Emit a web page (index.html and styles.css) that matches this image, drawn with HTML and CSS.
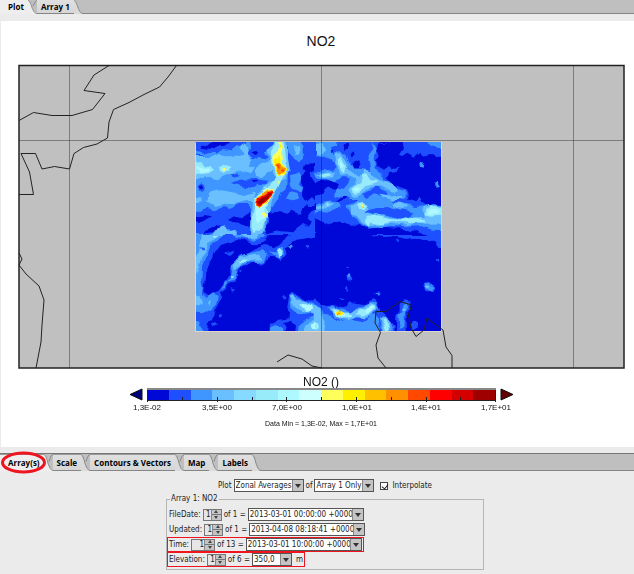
FILE: index.html
```html
<!DOCTYPE html>
<html lang="en">
<head>
<meta charset="utf-8">
<title>NO2 plot</title>
<link rel="stylesheet" href="styles.css">
</head>
<body>
<svg class="defs" aria-hidden="true">
  <symbol id="edge" viewBox="0 0 9 18" preserveAspectRatio="none">
    <path d="M0 0L1 1Q3 3 4 9T9 17V18H0Z" fill="#dadada"/>
    <path d="M0 .5Q2 1 3 6T6 15Q7 17 9 17.500M9 .5Q7 1 5 8" fill="none" stroke="#858585"/>
  </symbol>
  <symbol id="edge-active" viewBox="0 0 9 18" preserveAspectRatio="none">
    <path d="M0 0Q3 3 4 9T9 17V18H0Z" fill="#eee"/>
    <path d="M0 .5Q2 1 3 6T6 15Q7 17 9 17.500M9 .5Q7 1 5 8" fill="none" stroke="#858585"/>
  </symbol>
  <symbol id="edge-last" viewBox="0 0 9 18" preserveAspectRatio="none">
    <path d="M0 0Q2 1 3 6T6 15Q7 17 9 18H0Z" fill="#dadada"/>
    <path d="M0 .5Q2 1 3 6T6 15Q7 17 9 17.500" fill="none" stroke="#858585"/>
  </symbol>
</svg>

<nav class="tabs tabs-top" aria-label="Views">
  <button class="tab active">Plot</button><svg class="edge"><use href="#edge-active"/></svg>
  <button class="tab">Array 1</button><svg class="edge"><use href="#edge-last"/></svg>
</nav>

<main class="plot">
<svg class="chart" viewBox="1 21 633 426" role="img" aria-label="NO2 concentration map">
  <defs>
    <clipPath id="data"><rect x="195.500" y="142" width="245.500" height="189"/></clipPath>
    <clipPath id="nw"><rect x="-30" y="-30" width="405" height="330"/></clipPath>
    <clipPath id="ne"><rect x="0" y="-30" width="420" height="330"/></clipPath>
    <clipPath id="sw"><rect x="-30" y="0" width="405" height="330"/></clipPath>
    <filter id="ripple" x="-5%" y="-5%" width="110%" height="110%" color-interpolation-filters="sRGB">
      <feTurbulence type="fractalNoise" baseFrequency="0.1" numOctaves="1" seed="7"/>
      <feDisplacementMap in="SourceGraphic" scale="7" xChannelSelector="R" yChannelSelector="G"/>
    </filter>
  </defs>
  <text class="title" x="321" y="46">NO2</text>
  <rect x="19" y="66" width="605" height="302" fill="#c0c0c0"/>

  <g clip-path="url(#data)">
    <rect x="195" y="142" width="247" height="190" fill="#0008d8"/>
    <g filter="url(#ripple)">

    <g transform="translate(190 135) scale(.33333)" clip-path="url(#nw)">
      <path class="c2" d="M-20 0H390V301H-20Z"/>
      <path class="c1" d="M16 0H172L168 30 140 34 125 46 100 42 82 52 60 50 40 56 16 48ZM175 0H250L246 40 228 42 222 54 238 64 226 70 206 66 186 76 176 60 160 62 164 48 186 42ZM0 60L38 64 46 72 0 80ZM126 144L150 134 196 132 238 138 230 154 204 152 190 160 150 152ZM22 150L34 142 44 150 42 164 28 168ZM282 0H390V300H216L236 244 248 212 262 200 272 170 292 146 294 110 278 92 276 50ZM0 226L36 228 50 218 76 226 100 216 118 222 140 210 172 208 186 226 180 300H130L118 282 88 284 60 300H0ZM84 88L96 84 100 92 90 96ZM120 120L148 112 152 120 132 126Z"/>
      <path class="c0" d="M28 28L54 32 76 14 130 14 112 32 84 34 70 42 46 40 32 38ZM26 152L34 148 40 154 36 160 28 160ZM184 52L202 48 208 54 196 60ZM182 138L204 137 202 142 188 144ZM114 254L136 244 158 246 184 230 184 278 166 276 148 266 126 264ZM16 246L42 240 70 244 46 252 30 264 16 262ZM50 284L76 270 92 276 68 292 44 296ZM342 92L358 82 378 84 390 90V220L364 232 352 250 366 262 352 278 336 270 308 292 266 288 230 298 222 278 238 260 236 234 264 230 290 236 304 224 332 236 352 204 336 178 340 154 330 130 350 112 338 106ZM306 26L326 22 336 34 320 38 308 40Z"/>
      <path class="c1" d="M362 112L376 104 390 118V150L374 142 364 126ZM350 200L366 186 378 200 366 214 350 212ZM306 208L326 206 332 216 316 222Z"/>
      <path class="c2" d="M288 0L320 0 340 34 342 62 328 82 314 66 296 54ZM300 124L324 114 334 130 326 146 340 156 334 172 308 164 302 148ZM296 170L322 176 328 190 306 196 286 190Z"/>
      <path class="c3" d="M-10 66L60 66 88 54 110 58 128 68 158 52 150 40 160 26 176 38 168 54 184 78 180 92 194 100 184 118 160 110 144 104 130 118 104 126 86 134 60 128 36 132 -10 124ZM56 174L90 166 130 172 158 180 190 170 190 202 168 198 136 208 100 206 76 212 52 200ZM194 110L204 92 222 82 246 72 252 106 232 112 216 126 198 124ZM190 186L202 174 232 154 256 132 266 148 250 190 240 230 222 262 218 300H180L186 240ZM228 44L248 28 254 0H290L292 60 300 104 286 132 270 138 246 114 240 60ZM314 26L330 36 332 54 322 58ZM66 300L80 280 102 274 112 290 140 284 140 300ZM0 184L34 188 36 202 0 208Z"/>
      <path class="c5" d="M0 88L34 78 46 92 66 94 72 108 52 118 34 120 0 116ZM88 98L102 86 120 92 118 108 102 118 90 110ZM256 0H284L282 50 288 86 296 106 278 128 264 158 250 180 226 220 238 240 220 264 208 288 188 294 188 248 196 214 192 188 216 170 246 154 256 126 248 90 244 62Z"/>
      <path class="c6" d="M20 94L54 98 62 108 32 114ZM194 194L224 164 244 158 230 212 220 232 226 250 204 262 198 240Z"/>
      <path class="c8" d="M259 0H275L278 36 274 56 276 86 294 100 290 116 278 122 260 118 252 100 250 66 262 56 266 40ZM194 188L214 176 232 164 252 162 256 172 244 182 236 198 220 212 208 218 198 208ZM214 242L222 238 232 242 228 248 220 250ZM98 102L106 98 112 102 106 108ZM262 140L270 138 267 146Z"/>
      <path class="c9" d="M264 24L274 24 270 40 266 36ZM254 80L270 62 272 86 294 102 288 116 266 120 254 108Z"/>
      <path class="c11" d="M256 90L268 86 274 94 292 100 286 112 272 118 258 110ZM196 190L230 168 250 164 252 174 234 196 208 216 198 206Z"/>
      <path class="c12" d="M258 94L266 90 270 100 262 106ZM276 102L286 104 284 110 276 108Z"/>
      <path class="c13" d="M200 190L218 184 236 170 250 168 246 180 226 202 208 212 200 204Z"/>
      <path class="c15" d="M204 196L220 188 236 174 242 176 234 188 218 204 206 206Z"/>
    </g>

    <g transform="translate(315 135) scale(.33333)" clip-path="url(#ne)">
      <path class="c1" d="M0 0H410V62L362 66 352 60 328 64 316 54 300 68 276 56 262 66 252 62 264 36 258 20 194 24 180 50 192 66 180 76 184 92 204 104 220 92 230 100 250 96 248 108 222 112 220 122 212 130 236 152 256 158 276 166 280 194 302 202 314 184 322 202 338 212 358 206 410 218V301H336L310 288 288 292 252 278 210 276 176 280 158 282 134 264 104 274 76 262 42 270 0 250Z"/>
      <path class="c0" d="M194 0H258V22H190ZM0 148L20 136 46 136 72 148 66 162 40 158 22 176 0 182ZM84 28L98 26 100 38 90 42ZM40 52L52 46 58 52 46 58ZM104 60L112 52 116 66 106 70ZM110 84L132 76 140 88 130 100 114 98ZM66 198L88 182 94 188 74 204ZM118 186L140 182 154 190 138 200 122 196ZM176 198L204 198 210 204 188 210ZM224 236L250 234 272 240 256 246 230 244ZM34 204L52 200 58 206 40 212Z"/>
      <path class="c2" d="M0 0H70L66 34 48 40 54 60 74 48 94 56 100 74 118 102 142 102 166 110 160 72 172 42 174 22 182 42 176 72 182 100 202 114 204 134 230 148 248 162 272 168 272 188 254 188 232 202 254 202 278 208 302 216 334 214 356 208 400 212V286L350 284 320 274 266 276 230 272 194 278 160 278 136 262 112 246 102 224 98 208 118 202 128 192 106 192 92 186 58 184 52 170 62 160 86 164 100 148 104 130 82 126 58 142 34 132 6 132 0 112 20 106 52 104 62 92 50 74 32 66 0 60ZM0 210L22 200 52 196 76 206 80 216 46 228 22 224 0 236ZM330 10L348 14 410 10V40L366 38 348 34ZM316 84L322 78 328 86 326 98 318 96ZM364 146L372 140 374 156 364 158Z"/>
      <path class="c1" d="M180 220L220 216 260 224 298 232 284 248 246 250 204 240 176 240 144 230ZM180 154L218 170 214 186 180 178 154 192 142 180 162 170Z"/>
      <path class="c3" d="M0 28L24 26 34 42 20 56 0 54ZM60 58L76 54 90 70 98 84 96 102 112 112 128 126 148 104 166 108 174 126 192 134 234 152 246 166 234 170 196 154 168 156 146 174 128 184 108 186 100 164 116 150 128 146 126 130 98 120 78 122 68 96 58 80ZM4 116L34 110 60 108 58 124 24 128ZM0 216L22 210 34 198 58 206 46 216 26 218 0 226ZM108 210L130 204 150 206 162 222 148 234 170 240 204 244 226 250 264 252 302 246 330 246 322 222 340 210 372 212 400 220V270L348 272 314 262 278 272 234 266 200 270 156 274 130 250 108 238ZM196 176L226 182 252 178 262 184 238 196 204 188ZM232 206L260 204 280 214 260 222 238 216Z"/>
      <path class="c5" d="M66 74L80 66 88 82 96 92 90 118 80 112ZM110 160L126 148 142 142 138 114 154 112 166 136 190 140 174 148 150 154 136 172 114 178ZM18 116L44 112 52 118 24 124ZM34 204L46 208 40 214ZM152 246L182 242 218 252 258 254 292 248 326 252 332 262 288 264 232 258 202 268 166 262 160 276 150 262ZM334 222L352 212 396 220 396 238 350 242 330 238ZM126 210L142 204 158 210 148 222 132 222Z"/>
      <path class="c6" d="M114 160L130 152 138 160 126 170ZM74 82L84 80 88 98 80 102ZM342 224L376 226 370 236 344 236Z"/>
      <path class="c8" d="M136 214L142 210 148 216 142 220Z"/><path class="c11" d="M140 214h4v4h-4z"/>
    </g>

    <g transform="translate(190 235) scale(.33333)" clip-path="url(#sw)">
      <path class="c1" d="M-20 0H236L230 20 216 26 194 28 176 18 140 12 118 22 92 30 80 48 66 62 60 88 46 112 42 150 40 174 56 184 68 174 86 168 96 150 110 134 122 116 120 98 138 80 150 62 172 56 204 38 226 30 252 36 270 26 284 8 300 0H376V4L350 10 320 14 298 26 284 40 292 58 276 78 260 70 238 60 230 78 212 86 190 82 170 94 152 96 138 112 138 138 118 148 104 162 90 172 96 186 86 214 74 230 66 252 56 262 54 320H-20Z"/>
      <path class="c2" d="M-20 0H98L82 18 66 24 58 42 44 68 36 98 34 132 38 162 36 178 48 188 70 176 86 182 82 210 66 228 44 226 30 232 -20 224ZM92 162L104 144 122 130 126 106 122 92 142 74 160 58 190 52 218 46 230 56 222 78 200 84 176 82 156 92 138 102 134 134 118 138 106 154ZM122 0L142 6 186 14 224 8 234 0ZM238 46L258 50 262 36 278 34 282 60 266 72 256 66ZM292 32L306 28 314 36 302 42ZM-10 254L32 260 30 272 40 278 38 310H-10Z"/>
      <path class="c3" d="M36 0H88L72 14 56 22 44 50 34 64 26 102 16 118V80L28 46ZM128 90L146 70 164 62 190 58 212 64 216 76 184 78 164 78 146 92 132 98ZM0 186L28 180 36 200 26 214 0 212ZM54 198L66 196 60 216ZM150 0H210L194 8 164 8Z"/>
      <path class="c5" d="M260 48L268 38 278 48 276 64 266 70ZM68 0H82L74 8ZM146 82L160 70 176 72 160 80ZM122 120L130 122 126 130Z"/>
      <path class="c1" d="M106 52L132 46 136 52 118 60ZM122 160L136 164 126 170ZM276 182L282 176 286 190 278 194ZM86 240L94 236 96 244 88 248ZM66 262L76 258 80 268 70 274ZM298 178L308 168 322 184 342 192 366 198 390 208V320H312L318 268 302 258 282 260 290 278 276 310H236L240 266 266 254 300 250 292 216ZM350 34L358 32 362 40 352 40ZM190 12L204 10 204 20 194 20ZM144 108L158 102 152 114ZM30 34L42 36 36 48Z"/>
      <path class="c2" d="M300 184L308 172 320 188 342 196 376 208 390 220V310H320L326 274 350 254 376 244 362 234 326 238 304 218ZM240 278L260 270 280 280 276 310H242Z"/>
      <path class="c3" d="M302 178L310 176 318 194 346 198 376 214 390 230V310H336L346 272 362 258 384 252 362 230 338 232 320 218 306 204Z"/>
      <path class="c6" d="M328 212L342 204 370 212 372 224 350 230ZM362 266L376 260 390 268V282H366Z"/>
    </g>

    <g transform="translate(315 235) scale(.33333)">
      <path class="c1" d="M170 0H410V34L374 40 362 22 336 18 300 8 272 12 240 4 208 6ZM98 120L108 116 112 134 100 138ZM90 158L96 152 98 168 92 170ZM174 180L192 172 198 180 188 186ZM326 144L338 140 356 154 354 172 334 172ZM366 72h6v8h-6ZM244 14h8v6h-8ZM74 188h12v4H74ZM0 196L18 206 40 210 56 206 80 220 98 216 104 198 120 206 148 210 172 192 188 202 196 228 210 234 218 252 236 272V310H0ZM244 242L254 228 254 206 268 196 290 200 284 224 274 230 276 310H242ZM284 272L292 260 306 264 308 276 290 286ZM92 92h6v4h-6Z"/>
      <path class="c2" d="M0 210L20 220 26 240 48 242 66 256 88 260 104 252 136 260 154 254 168 240 182 238 192 252 196 310H0ZM40 216L52 208 66 220 104 232 122 218 146 216 164 200 184 202 192 222 170 240 152 248 124 248 98 262 74 254 54 240ZM200 240L216 246 230 276 230 310H206L196 258ZM250 238L262 228 264 212 276 202 280 212 270 232 268 276 254 282ZM328 146L338 144 352 156 350 168 336 166ZM100 120h8v10h-8ZM180 178h12v4h-12Z"/>
      <path class="c3" d="M0 212L16 220 20 250 30 268 24 310H0ZM46 222L60 214 76 232 106 232 122 220 146 220 164 204 184 210 186 226 160 240 144 248 122 244 100 256 76 248ZM194 246L210 242 222 266 224 300H212L202 270ZM262 218h10v6h-10ZM332 150L340 154 340 160 332 158Z"/>
      <path class="c5" d="M0 260L10 266 12 280 0 286ZM52 224L62 220 78 232 108 238 108 246 86 250 66 242ZM120 234L136 222 152 224 168 208 184 214 182 224 160 234 142 242ZM200 250L210 248 218 268 222 284 214 286Z"/>
      <path class="c6" d="M58 226L72 228 88 238 84 244 66 240ZM150 228L164 212 178 214 176 224 158 232Z"/>
      <path class="c9" d="M62 228L72 226 84 234 82 240 66 236Z"/><path class="c11" d="M66 230h10v5H66z"/>
    </g>
    </g>
  </g>
  <path class="rim" d="M195.500 331V142.500M195 331.500H441.500V142"/>

  <path class="grid" d="M69.500 66V368M321.500 66V368M573.500 66V368M19 140.500H624"/>
  <path class="coast" d="M109 65.500L94 75 84 90.500 105 93.500 92.500 109.500 72 115.500H52L33.500 112.500 19 120.500M176.500 65.500L168 77 159.500 87 144 94.500 129 102.500 113.500 109.500 109 122 107.500 138 97 144 83.500 147.500 74 153.500 69.500 169 54.500 166.500 42 169 35.500 153.500H21L29.500 172 33.500 194.500H19M19 253L22 259 19 265 26 274 39 286 44 300 42 325 41 342 36 368M277 362L288 355 302 359 312 366 322 368M386 368L378 358 376 345 380.500 332.500 375 323 376 311.500H386L400 301.500 411.500 305 408.500 315 411 328 416 336.500 424 330 427 318 443 330 446 347 452 355.500V368"/>
  <rect x="19" y="65.500" width="605" height="302.500" fill="none" stroke="#222" stroke-width="1.500"/>

  <text class="units" x="321" y="386">NO2 ()</text>
  <path d="M130 394.500L142 389V400Z" fill="#000078" stroke="#111"/>
  <path d="M513 394.500L501 389V400Z" fill="#600000" stroke="#111"/>
  <g>
    <path class="c0" d="M147 389h22v11h-22z"/><path class="c1" d="M169 389h22v11h-22z"/>
    <path class="c2" d="M191 389h22v11h-22z"/><path class="c3" d="M212 389h22v11h-22z"/>
    <path class="c4" d="M234 389h22v11h-22z"/><path class="c5" d="M256 389h22v11h-22z"/>
    <path class="c6" d="M278 389h22v11h-22z"/><path class="c7" d="M299 389h22v11h-22z"/>
    <path class="c8" d="M321 389h22v11h-22z"/><path class="c9" d="M343 389h22v11h-22z"/>
    <path class="c10" d="M365 389h22v11h-22z"/><path class="c11" d="M386 389h22v11h-22z"/>
    <path class="c12" d="M408 389h22v11h-22z"/><path class="c13" d="M430 389h22v11h-22z"/>
    <path class="c14" d="M452 389h22v11h-22z"/><path class="c15" d="M473 389h22v11h-22z"/>
  </g>
  <path class="axis" d="M147.500 402V389M147 400.500H496M495.500 389V402M182.500 400V397M217.500 402V397M252.500 400V397M286.500 402V397M321.500 400V397M356.500 402V397M391.500 400V397M426.500 402V397M460.500 400V397"/>
  <path d="M147 389H496" stroke="#888" stroke-width="2"/>
  <g class="ticks">
    <text x="147" y="410">1,3E-02</text><text x="217" y="410">3,5E+00</text>
    <text x="287" y="410">7,0E+00</text><text x="357" y="410">1,0E+01</text>
    <text x="426" y="410">1,4E+01</text><text x="496" y="410">1,7E+01</text>
  </g>
  <text class="range" x="321" y="426">Data Min = 1,3E-02, Max = 1,7E+01</text>
</svg>
</main>

<nav class="tabs tabs-bottom" aria-label="Settings">
  <button class="tab active">Array(s)<svg class="ring" viewBox="0 0 46 23"><ellipse cx="23.500" cy="11.500" rx="21" ry="9.500"/></svg></button><svg class="edge"><use href="#edge-active"/></svg>
  <button class="tab">Scale</button><svg class="edge"><use href="#edge"/></svg>
  <button class="tab">Contours &amp; Vectors</button><svg class="edge"><use href="#edge"/></svg>
  <button class="tab">Map</button><svg class="edge"><use href="#edge"/></svg>
  <button class="tab">Labels</button><svg class="edge"><use href="#edge-last"/></svg>
</nav>

<form class="settings">
  <div class="row">
    <label for="kind">Plot</label>
    <span class="combo medium"><select id="kind"><option>Zonal Averages</option></select></span>
    <label for="source">of</label>
    <span class="combo small"><select id="source"><option>Array 1 Only</option></select></span>
    <label class="check"><input type="checkbox" checked> Interpolate</label>
  </div>
  <fieldset>
    <legend>Array 1: NO2</legend>
    <div class="field">
      <label for="fd">FileDate:</label>
      <span class="spin"><input id="fd" value="1"><span class="steps"><button type="button" aria-label="Next file date"></button><button type="button" aria-label="Previous file date"></button></span></span>
      <label for="fds">of 1 =</label>
      <span class="combo wide"><select id="fds"><option>2013-03-01 00:00:00 +0000</option></select></span>
    </div>
    <div class="field">
      <label for="up">Updated:</label>
      <span class="spin"><input id="up" value="1"><span class="steps"><button type="button" aria-label="Next update"></button><button type="button" aria-label="Previous update"></button></span></span>
      <label for="ups">of 1 =</label>
      <span class="combo wide"><select id="ups"><option>2013-04-08 08:18:41 +0000</option></select></span>
    </div>
    <div class="field marked">
      <label for="ti">Time:</label>
      <span class="spin two"><input id="ti" value="1"><span class="steps"><button type="button" aria-label="Next time"></button><button type="button" aria-label="Previous time"></button></span></span>
      <label for="tis">of 13 =</label>
      <span class="combo wide"><select id="tis"><option>2013-03-01 10:00:00 +0000</option></select></span>
    </div>
    <div class="field marked">
      <label for="el">Elevation:</label>
      <span class="spin"><input id="el" value="1"><span class="steps"><button type="button" aria-label="Next elevation"></button><button type="button" aria-label="Previous elevation"></button></span></span>
      <label for="els">of 6 =</label>
      <span class="combo tiny"><select id="els"><option>350,0</option></select></span>
      <span class="unit">m</span>
    </div>
  </fieldset>
</form>
</body>
</html>
```

FILE: styles.css
```css
* { box-sizing: border-box; }
body {
  margin: 0;
  background: #ebebeb;
  color: #222;
  font: 8px/13px "DejaVu Sans Condensed", "Open Sans", sans-serif;
}
button, input, select { font: inherit; color: inherit; margin: 0; padding: 0; border: 0; border-radius: 0; }
.defs { position: absolute; width: 0; height: 0; }

.tabs {
  display: flex;
  height: 18px;
  background: #bfbfbf;
  border-top: 1px solid #777;
  box-shadow: inset 0 -1px #858585;
}
.tabs-top { height: 14px; border-top: 0; }
.tab {
  position: relative;
  padding: 0 4px;
  background: linear-gradient(#e0e0e0, #d6d6d6);
  border-top: 1px solid #999;
  border-bottom: 1px solid #858585;
  font: bold 8px/15px "Open Sans", sans-serif;
  color: #000;
}
.tab.active { padding-left: 8px; background: #eee; border-bottom-color: #eee; }
.tabs-top .tab { border-top: 0; line-height: 12px; }
.edge { width: 9px; height: 100%; flex: none; }
.ring { position: absolute; left: 0; top: -4px; width: 46px; height: 23px; z-index: 1; }
.ring ellipse { fill: none; stroke: #ee1420; stroke-width: 3; }

.plot { margin: 7px 0 6px 1px; background: #fff; }
.chart { display: block; width: 100%; height: auto; font-family: "Liberation Sans", Arial, sans-serif; }
.chart text { text-anchor: middle; fill: #111; }
.title { font-size: 14px; }
.units { font-size: 12px; }
.ticks { font-size: 8px; }
.range { font-size: 7px; }
.grid { stroke: #000; stroke-opacity: .35; fill: none; }
.coast { stroke: #222; fill: none; }
.rim { stroke: #ded6c8; fill: none; }
.axis { stroke: #222; fill: none; }
.c0 { fill: #0008d8; }
.c1 { fill: #1e50ff; }
.c2 { fill: #3f96ff; }
.c3 { fill: #6ac0ff; }
.c4 { fill: #86daff; }
.c5 { fill: #98ecfa; }
.c6 { fill: #aef8ff; }
.c7 { fill: #ceffff; }
.c8 { fill: #ffff5c; }
.c9 { fill: #fff000; }
.c10 { fill: #ffc000; }
.c11 { fill: #ff9000; }
.c12 { fill: #ff4800; }
.c13 { fill: #ff0000; }
.c14 { fill: #d40000; }
.c15 { fill: #9e0000; }

.settings { display: flex; flex-direction: column; align-items: center; padding: 7px 0 4px 16px; }
.row, .field { display: flex; align-items: center; gap: 2px; white-space: nowrap; }
.row { height: 15px; }
.field { height: 15px; width: max-content; padding: 0 1px; border: 1px solid transparent; }
.field.marked { border-color: #ee1420; }

.combo { display: flex; position: relative; height: 13px; border: 1px solid #555; background: #fff; }
.combo::before {
  content: "";
  position: absolute;
  right: 0;
  top: 0;
  width: 10px;
  height: 11px;
  background: #c4c4c4;
  border-left: 1px solid #888;
  pointer-events: none;
}
.combo::after {
  content: "";
  position: absolute;
  right: 2px;
  top: 4px;
  border: 3px solid transparent;
  border-top: 4px solid #333;
  border-bottom: 0;
  pointer-events: none;
}
.combo select { appearance: none; width: 100%; height: 11px; line-height: 11px; padding-left: 1px; background: none; }
.wide { width: 116px; }
.medium { width: 70px; }
.small { width: 60px; }
.tiny { width: 40px; }
.check { display: flex; align-items: center; gap: 4px; margin-left: 4px; }
.check input {
  appearance: none;
  width: 8px;
  height: 8px;
  border: 1px solid #444;
  background: #fff;
}
.check input:checked::after {
  content: "";
  display: block;
  width: 3px;
  height: 5px;
  margin-left: 2px;
  border: solid #222;
  border-width: 0 1px 1px 0;
  transform: rotate(40deg);
}

fieldset { width: 318px; margin: 0; padding: 2px 0 2px 0; border: 1px solid #b5b5b5; }
legend { padding: 0 1px; margin-left: 3px; line-height: 12px; }
.spin { display: flex; width: 19px; height: 12px; border: 1px solid #777; background: #ddd; }
.spin.two { width: 24px; }
.spin input { flex: 1; min-width: 0; width: 6px; height: 10px; background: #e6e6e6; text-align: right; }
.steps { display: flex; flex-direction: column; width: 10px; background: #c4c4c4; border-left: 1px solid #888; }
.steps button { flex: 1; display: flex; align-items: center; justify-content: center; background: none; }
.steps button + button { border-top: 1px solid #777; }
.steps button::before { content: ""; border: 2px solid transparent; border-bottom: 3px solid #444; border-top: 0; }
.steps button + button::before { border-top: 3px solid #444; border-bottom: 0; }
.unit { margin-left: 2px; }
```
